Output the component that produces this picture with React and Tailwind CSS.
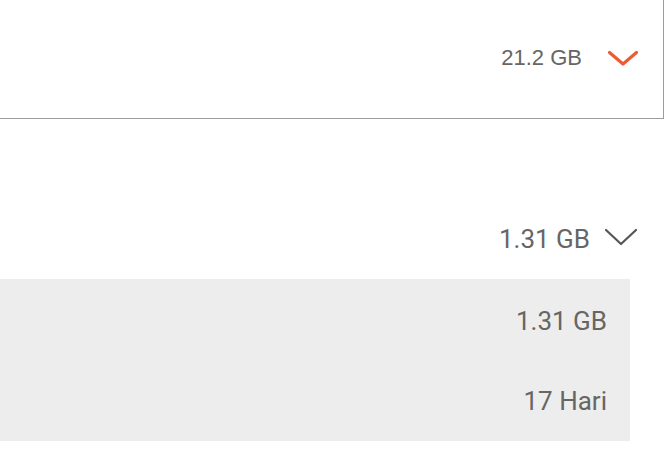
export default function App() {
  return (
    <div className="w-[664px] h-[468px] bg-white overflow-hidden">
      {/* top card */}
      <div className="h-[119px] border-b border-r border-[#9c9c9c] flex items-start justify-end pt-[43px] pr-[24px]">
        <span className="text-[22px] leading-[30px] text-[#666666] font-['Liberation_Sans',Arial,sans-serif]">21.2 GB</span>
        <svg className="ml-[25px] mt-[6px]" width="32" height="18" viewBox="0 0 32 18" fill="none">
          <path d="M2.5 3.5 L16 15 L29.5 3.5" stroke="#ee5a33" strokeWidth="3.2" strokeLinecap="round" strokeLinejoin="round" />
        </svg>
      </div>

      {/* second row */}
      <div className="h-[160px] flex items-start justify-end pt-[105px] pr-[26px] font-['Roboto',sans-serif]">
        <span className="text-[26px] leading-[30px] text-[#666666]">1.31 GB</span>
        <svg className="ml-[14px] mt-[3px]" width="34" height="20" viewBox="0 0 34 20" fill="none">
          <path d="M2 3 L17 17 L32 3" stroke="#555555" strokeWidth="2.2" strokeLinecap="round" strokeLinejoin="round" />
        </svg>
      </div>

      {/* detail box */}
      <div className="w-[630px] h-[162px] bg-[#ededed] flex flex-col items-end pr-[23px] pt-[27px] gap-[50px] font-['Roboto',sans-serif] text-[26px] leading-[30px] text-[#666666]">
        <span>1.31 GB</span>
        <span>17 Hari</span>
      </div>
    </div>
  );
}
